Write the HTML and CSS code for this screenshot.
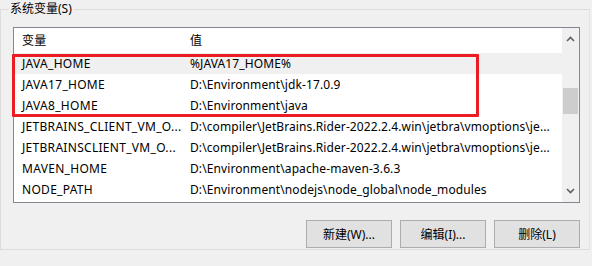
FILE: index.html
```html
<!DOCTYPE html>
<html>
<head>
    <title>系统变量</title>
    <link rel="stylesheet" href="styles.css">
</head>
<body>
    <fieldset class="group">
        <legend>系统变量(S)</legend>

        <div class="list">
            <div class="table">
                <div class="row head">
                    <div class="cell name">变量</div>
                    <div class="cell value">值</div>
                </div>
                <div class="row selected">
                    <div class="cell name">JAVA_HOME</div>
                    <div class="cell value">%JAVA17_HOME%</div>
                </div>
                <div class="row">
                    <div class="cell name">JAVA17_HOME</div>
                    <div class="cell value">D:\Environment\jdk-17.0.9</div>
                </div>
                <div class="row">
                    <div class="cell name">JAVA8_HOME</div>
                    <div class="cell value">D:\Environment\java</div>
                </div>
                <div class="row">
                    <div class="cell name">JETBRAINS_CLIENT_VM_O...</div>
                    <div class="cell value">D:\compiler\JetBrains.Rider-2022.2.4.win\jetbra\vmoptions\je...</div>
                </div>
                <div class="row">
                    <div class="cell name">JETBRAINSCLIENT_VM_O...</div>
                    <div class="cell value">D:\compiler\JetBrains.Rider-2022.2.4.win\jetbra\vmoptions\je...</div>
                </div>
                <div class="row">
                    <div class="cell name">MAVEN_HOME</div>
                    <div class="cell value">D:\Environment\apache-maven-3.6.3</div>
                </div>
                <div class="row">
                    <div class="cell name">NODE_PATH</div>
                    <div class="cell value">D:\Environment\nodejs\node_global\node_modules</div>
                </div>

                <div class="highlight"></div>
            </div>

            <div class="scrollbar">
                <svg class="arrow" width="9" height="6" viewBox="0 0 9 6">
                    <path d="M1 5 L4.5 1.5 L8 5" fill="none" stroke="#606060" stroke-width="1.6"/>
                </svg>
                <div class="track">
                    <div class="thumb"></div>
                </div>
                <svg class="arrow" width="9" height="6" viewBox="0 0 9 6">
                    <path d="M1 1 L4.5 4.5 L8 1" fill="none" stroke="#606060" stroke-width="1.6"/>
                </svg>
            </div>
        </div>

        <div class="buttons">
            <button type="button">新建(W)...</button>
            <button type="button">编辑(I)...</button>
            <button type="button">删除(L)</button>
        </div>
    </fieldset>
</body>
</html>
```

FILE: styles.css
```css
body {
    margin: 0;
    background-color: #f0f0f0;
    font-family: "Noto Sans", "Noto Sans CJK SC", sans-serif;
    font-size: 12px;
    color: #000;
}

.group {
    margin: 1px 0 0 0;
    padding: 0 0 0 12px;
    width: 576px;
    height: 247px;
    border: 1px solid #dcdcdc;
    border-right-color: #e3e3e3;
    box-sizing: content-box;
}

.group legend {
    margin-left: -5px;
    padding: 0 2px;
    line-height: 16px;
}

.list {
    display: flex;
    margin-top: 10px;
    width: 565px;
    height: 174px;
    border: 1px solid #828790;
    background-color: #fff;
}

.table {
    position: relative;
    width: 548px;
}

.row {
    display: flex;
    height: 21px;
    line-height: 21px;
}

.row.head {
    height: 25px;
    line-height: 25px;
}

.row.selected {
    background-color: #f0f0f0;
}

.cell {
    white-space: nowrap;
    overflow: hidden;
}

.cell.name {
    width: 161px;
    padding-left: 8px;
    letter-spacing: 0.3px;
}

.cell.value {
    padding-left: 6px;
    letter-spacing: 0.1px;
}

.head .cell.name {
    border-right: 1px solid #e5e5e5;
}

.row .cell.name {
    border-right: 1px solid transparent;
}

.highlight {
    position: absolute;
    left: -2px;
    top: 26px;
    width: 461px;
    height: 57px;
    border: 3px solid #ec1c24;
    border-radius: 1px;
}

.scrollbar {
    display: flex;
    flex-direction: column;
    align-items: center;
    width: 17px;
    background-color: #f0f0f0;
}

.scrollbar .arrow {
    margin: 8px 0;
}

.track {
    flex: 1;
    width: 100%;
}

.thumb {
    margin: 38px 0 0 1px;
    width: 15px;
    height: 26px;
    background-color: #cdcdcd;
}

.buttons {
    display: flex;
    justify-content: flex-end;
    gap: 8px;
    width: 567px;
    margin-top: 17px;
}

button {
    width: 86px;
    height: 28px;
    background-color: #e1e1e1;
    border: 1px solid #adadad;
    font-family: "Noto Sans", "Noto Sans CJK SC", sans-serif;
    font-size: 12px;
    color: #000;
    padding: 0;
}
```
